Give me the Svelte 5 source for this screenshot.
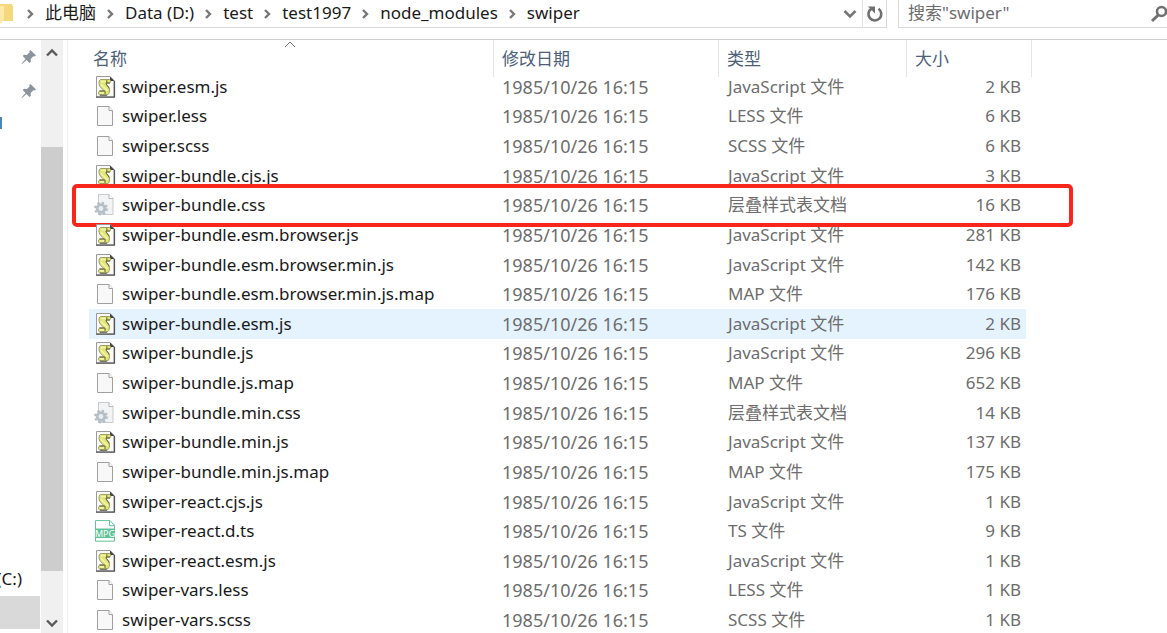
<script>
const crumbs = ['此电脑', 'Data (D:)', 'test', 'test1997', 'node_modules', 'swiper'];
const js = 'JavaScript 文件';
const css = '层叠样式表文档';
const files = [
  {name: 'swiper.esm.js', type: js, size: 2, icon: 'js'},
  {name: 'swiper.less', type: 'LESS 文件', size: 6, icon: 'blank'},
  {name: 'swiper.scss', type: 'SCSS 文件', size: 6, icon: 'blank'},
  {name: 'swiper-bundle.cjs.js', type: js, size: 3, icon: 'js'},
  {name: 'swiper-bundle.css', type: css, size: 16, icon: 'css', marked: true},
  {name: 'swiper-bundle.esm.browser.js', type: js, size: 281, icon: 'js'},
  {name: 'swiper-bundle.esm.browser.min.js', type: js, size: 142, icon: 'js'},
  {name: 'swiper-bundle.esm.browser.min.js.map', type: 'MAP 文件', size: 176, icon: 'blank'},
  {name: 'swiper-bundle.esm.js', type: js, size: 2, icon: 'js'},
  {name: 'swiper-bundle.js', type: js, size: 296, icon: 'js'},
  {name: 'swiper-bundle.js.map', type: 'MAP 文件', size: 652, icon: 'blank'},
  {name: 'swiper-bundle.min.css', type: css, size: 14, icon: 'css'},
  {name: 'swiper-bundle.min.js', type: js, size: 137, icon: 'js'},
  {name: 'swiper-bundle.min.js.map', type: 'MAP 文件', size: 175, icon: 'blank'},
  {name: 'swiper-react.cjs.js', type: js, size: 1, icon: 'js'},
  {name: 'swiper-react.d.ts', type: 'TS 文件', size: 9, icon: 'mpg'},
  {name: 'swiper-react.esm.js', type: js, size: 1, icon: 'js'},
  {name: 'swiper-vars.less', type: 'LESS 文件', size: 1, icon: 'blank'},
  {name: 'swiper-vars.scss', type: 'SCSS 文件', size: 1, icon: 'blank'}
];
let selected = $state('swiper-bundle.esm.js');
let query = $state('');
</script>

<div class="explorer">
  <header>
    <nav class="address" aria-label="路径">
      <svg class="folder" width="14" height="24" viewBox="0 0 14 24">
        <path d="M0 2h12l1 3v14H0z" fill="#f5d77c"/>
        <path d="M0 4h4v14l-4 4z" fill="#ffe9a8"/>
      </svg>
      {#each crumbs as crumb}
        <svg class="sep" width="29" height="12" viewBox="0 0 29 12">
          <path d="M12 2l4 4-4 4" fill="none" stroke="#777" stroke-width="2.4"/>
        </svg>
        <button class="crumb">{crumb}</button>
      {/each}
      <button class="tool drop" aria-label="历史记录">
        <svg width="14" height="10" viewBox="0 0 14 10">
          <path d="M1.5 2L7 7.500L12.500 2" fill="none" stroke="#777" stroke-width="2.600"/>
        </svg>
      </button>
      <button class="tool refresh" aria-label="刷新">
        <svg width="18" height="18" viewBox="0 0 18 18">
          <path d="M12.500 3.800A6.400 6.400 0 1 1 5.500 3.600" fill="none" stroke="#707070" stroke-width="2.600"/>
          <path d="M2 1.500h7v7z" fill="#707070"/>
        </svg>
      </button>
    </nav>
    <label class="search">
      <input type="text" bind:value={query} aria-label="搜索" placeholder={'搜索"swiper"'}>
      <svg width="17" height="18" viewBox="0 0 17 18">
        <circle cx="11.500" cy="6.500" r="4.500" fill="none" stroke="#707070" stroke-width="2.600"/>
        <path d="M8.300 10L2 16" stroke="#707070" stroke-width="3"/>
      </svg>
    </label>
  </header>

  <div class="body">
    <aside>
      {#each [1, 2] as pin (pin)}
        <svg class="pin" width="16" height="16" viewBox="0 0 16 16">
          <path d="M9.500 1l5.500 5.500-1.500 1-1.200-.3-2.600 2.700.2 2.800-1.400 1.300-3-3L1 15l-.5-.5 4-4.600-2.800-2.800L3 5.800l2.900.3 2.600-2.600L8.300 2.300z" fill="#8b949c"/>
        </svg>
      {/each}
      <span class="sliver"></span>
      <div class="drives">
        <span class="drive">(C:)</span>
        <span class="drive current"></span>
      </div>
    </aside>
    <div class="scrollbar">
      <button aria-label="向上滚动">
        <svg width="12" height="10" viewBox="0 0 12 10"><path d="M1 7.500L6 2.500l5 5" fill="none" stroke="#5a5a5a" stroke-width="2.400"/></svg>
      </button>
      <div class="track"><div class="thumb"></div></div>
      <button aria-label="向下滚动">
        <svg width="12" height="10" viewBox="0 0 12 10"><path d="M1 2.500l5 5 5-5" fill="none" stroke="#5a5a5a" stroke-width="2.400"/></svg>
      </button>
    </div>
    <main>
      <table>
        <thead>
          <tr>
            <th class="name">
              名称
              <svg class="sorted" width="12" height="7" viewBox="0 0 12 7"><path d="M1 6l5-5 5 5" fill="none" stroke="#777"/></svg>
            </th>
            <th class="date">修改日期</th>
            <th class="type">类型</th>
            <th class="size">大小</th>
          </tr>
        </thead>
        <tbody>
          {#each files as file}
            <tr class:selected={selected == file.name} onclick={() => (selected = file.name)}>
              <td class="name">
                <div class="file">
                  {#if file.icon == 'js'}
                    <svg width="22" height="22" viewBox="0 0 22 22">
                      <path d="M2.500 .5H16l4 4V21H2.500z" fill="#fafafa" stroke="#9a9a9a"/>
                      <path d="M2 21.200h18.500V5" fill="none" stroke="#555" stroke-width="1.200"/>
                      <path d="M16 .5v4.500h4.500z" fill="#444"/>
                      <path d="M6.500 3.500H15c2 0 2.500 3.500 0 3.500h-3c.5 2.500 3.500 3.500 3.500 7 0 3-1 5-3 5H6c-2 0-2-4 0-4h3.500C9 12.500 5 11.500 5 7.500c0-2 .3-3.500 1.500-4z" fill="#dfe47c" stroke="#8a8c4a" stroke-width=".8"/>
                      <path d="M7 5.500h5M7 8c1 3 5 3.500 6.500 7M6 17h5" fill="none" stroke="#f3f6a6" stroke-width="1.500"/>
                      <path d="M12 7h4M12.800 4.200v2.400M12 7.500c.3 1.800 2.500 3 3.200 5M5.500 15h5.500v3" fill="none" stroke="#50522a" stroke-width=".9"/>
                      <path d="M6 19.200h7" stroke="#444" stroke-width=".9"/>
                    </svg>
                  {:else if file.icon == 'css'}
                    <svg width="22" height="22" viewBox="0 0 22 22">
                      <path d="M4.500 .5H15l4 4v16H4.500z" fill="#f1f3f4" stroke="#c8cccf"/>
                      <path d="M15 .5v4h4" fill="#fff" stroke="#b4b8ba"/>
                      <circle cx="7" cy="14.500" r="3.800" fill="#e8eef2" stroke="#b4bec6" stroke-width="2.800"/>
                      <circle cx="7" cy="14.500" r="5.900" fill="none" stroke="#b4bec6" stroke-width="2" stroke-dasharray="2.400 2.233"/>
                    </svg>
                  {:else if file.icon == 'mpg'}
                    <svg width="22" height="22" viewBox="0 0 22 22">
                      <path d="M1.500 .6H16l4.500 4.700v15.900h-19z" fill="#fff" stroke="#5fc399"/>
                      <path d="M15.500 1v4.700h5" fill="none" stroke="#5fc399"/>
                      <path d="M1 8.500h20V18H1z" fill="#5fc399"/>
                      <text x="11" y="16.500" text-anchor="middle" font-size="9" fill="#fff">MPG</text>
                    </svg>
                  {:else}
                    <svg width="22" height="22" viewBox="0 0 22 22">
                      <path d="M3.500 1.500H15l3.500 4v15h-15z" fill="#f8f8f8" stroke="#a0a0a0"/>
                      <path d="M15 1.500v4h3.500" fill="#fff" stroke="#a0a0a0"/>
                    </svg>
                  {/if}
                  <span>{file.name}</span>
                </div>
                {#if file.marked}<span class="marker"></span>{/if}
              </td>
              <td class="date">1985/10/26 16:15</td>
              <td class="type">{file.type}</td>
              <td class="size">{file.size} KB</td>
            </tr>
          {/each}
        </tbody>
      </table>
    </main>
  </div>
</div>

<style>
  :global(body) {
    margin: 0;
    background: #fff;
  }
  .explorer {
    display: flex;
    flex-direction: column;
    height: 100vh;
    overflow: hidden;
    font: 17px/24px "Noto Sans", "Noto Sans CJK SC", sans-serif;
    color: #1a1a1a;
  }
  svg {
    display: block;
    flex: none;
  }
  button {
    border: 0;
    padding: 0;
    background: none;
    font: inherit;
    color: inherit;
  }
  header {
    display: flex;
    flex: none;
    gap: 11px;
    height: 28px;
    padding-bottom: 11px;
    border-bottom: 1px solid #d0d0d0;
  }
  .address {
    display: flex;
    flex: 1;
    align-items: center;
    border: solid #d9d9d9;
    border-width: 0 1px 1px 0;
  }
  .folder {
    margin-right: 2px;
  }
  .crumb {
    padding-bottom: 2px;
    white-space: nowrap;
  }
  .tool {
    display: flex;
    align-items: center;
    justify-content: center;
    align-self: stretch;
    width: 24px;
  }
  .drop {
    margin-left: auto;
  }
  .refresh {
    border-left: 1px solid #e2e2e2;
  }
  .search {
    display: flex;
    align-items: center;
    box-sizing: border-box;
    width: 269px;
    border: solid #d9d9d9;
    border-width: 0 0 1px 1px;
  }
  .search input {
    flex: 1;
    min-width: 0;
    border: 0;
    outline: 0;
    padding: 0 0 2px 9px;
    background: none;
    font: inherit;
  }
  .search input::placeholder {
    color: #6d6d6d;
    opacity: 1;
  }
  .body {
    display: flex;
    flex: 1;
    min-height: 0;
  }
  aside {
    display: flex;
    flex-direction: column;
    width: 41px;
    overflow: hidden;
  }
  .pin {
    margin: 9px 0 9px 21px;
  }
  .sliver {
    width: 2px;
    height: 12px;
    margin-top: 9px;
    background: #4a86b8;
  }
  .drives {
    margin-top: auto;
    margin-bottom: 4px;
  }
  .drive {
    display: flex;
    justify-content: flex-end;
    height: 33px;
    line-height: 32px;
    margin-right: 1px;
    padding-right: 18px;
  }
  .current {
    background: #d9d9d9;
  }
  .scrollbar {
    display: flex;
    flex-direction: column;
    width: 22px;
    background: #f0f0f0;
  }
  .scrollbar button {
    display: flex;
    align-items: center;
    justify-content: center;
    height: 26px;
  }
  .scrollbar button:last-child {
    height: 20px;
  }
  .track {
    flex: 1;
    display: flex;
    flex-direction: column;
    justify-content: flex-end;
    padding-bottom: 42px;
  }
  .thumb {
    height: 84%;
    background: #cdcdcd;
  }
  main {
    flex: 1;
    margin-left: 4px;
    border-left: 1px solid #f0f0f0;
    padding-left: 21px;
    padding-right: 141px;
  }
  table {
    width: 100%;
    height: calc(100% + 2px);
    border-collapse: collapse;
    table-layout: fixed;
  }
  th, td {
    padding: 0 0 0 9px;
    text-align: left;
    font-weight: 400;
    white-space: nowrap;
  }
  th {
    position: relative;
    height: 27px;
    padding-top: 5px;
    padding-left: 8px;
    color: #4c607a;
  }
  /* column dividers reach down past the header onto the first row */
  th::after {
    content: "";
    position: absolute;
    top: 0;
    right: 0;
    width: 1px;
    height: 37px;
    background: #e5e5e5;
  }
  th.size::after {
    right: -6px;
  }
  th.name {
    padding-left: 4px;
  }
  .sorted {
    position: absolute;
    top: 1px;
    left: calc(50% - 8px);
  }
  tbody tr {
    position: relative;
  }
  tbody tr:hover, .selected {
    background: #e5f3ff;
  }
  td {
    color: #6d6d6d;
  }
  td.name {
    padding-left: 5px;
    color: #1a1a1a;
  }
  td.date {
    padding-left: 8px;
    font-size: 18px;
  }
  .date {
    width: 217px;
  }
  .type {
    width: 180px;
  }
  .size {
    width: 111px;
  }
  td.size {
    width: auto;
    padding: 0 5px 0 0;
    text-align: right;
  }
  .file {
    display: flex;
    align-items: center;
    gap: 6px;
  }
  .marker {
    position: absolute;
    inset: -7px -47px -7px -17px;
    border: 4px solid #f8261b;
    border-radius: 5px;
    pointer-events: none;
  }
</style>
